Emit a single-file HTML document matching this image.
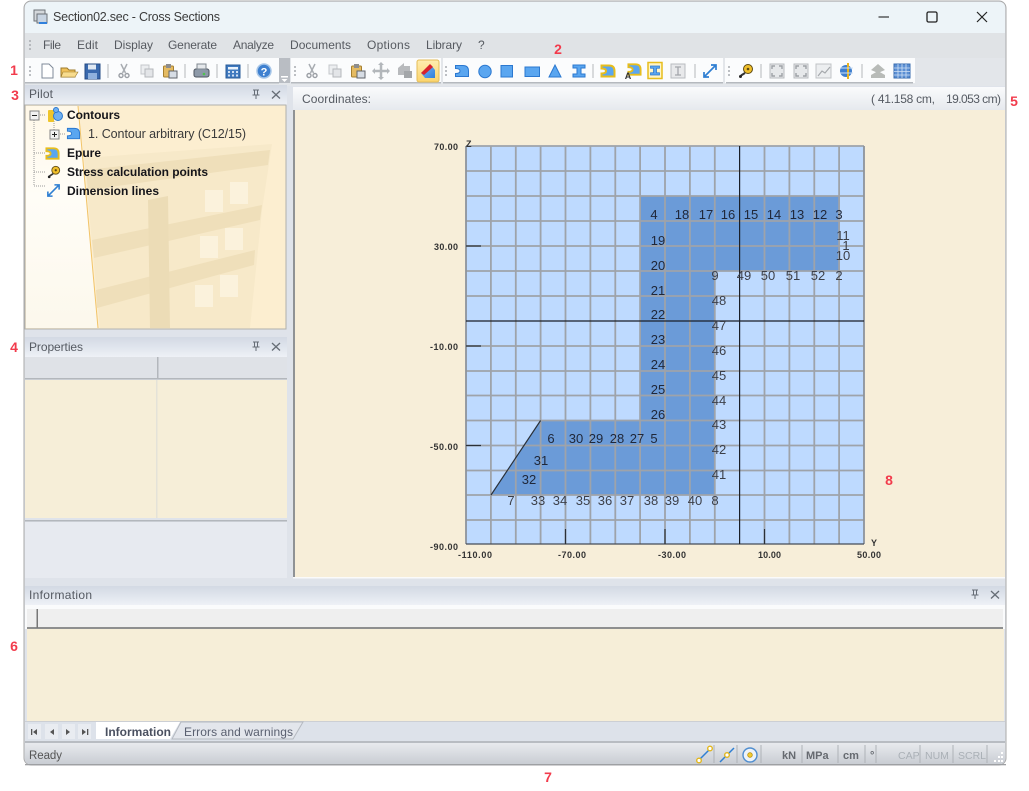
<!DOCTYPE html>
<html><head><meta charset="utf-8"><title>Section02.sec - Cross Sections</title>
<style>
html,body{margin:0;padding:0;background:#fff;width:1029px;height:791px;overflow:hidden}
svg{display:block}
text{font-family:"Liberation Sans",sans-serif}
.m{font-size:12px;fill:#565a60}
.h{font-size:12px;fill:#555a62}
.n{font-size:13px;fill:#20283a;text-anchor:middle}
.l{font-size:13px;fill:#3c3f48;text-anchor:middle}
.a{font-size:9px;font-weight:bold;fill:#333}
.r{font-size:14px;font-weight:bold;fill:#f23b4c;text-anchor:middle}
.t{font-size:12px;font-weight:bold;fill:#15151a}
.s{font-size:11.5px;fill:#555}
.u{font-size:11px;font-weight:bold;fill:#666a70}
.g{font-size:10.5px;fill:#aab0b6}
</style></head><body>
<svg width="1029" height="791" viewBox="0 0 1029 791" xmlns="http://www.w3.org/2000/svg">
<defs>
<linearGradient id="hd" x1="0" y1="0" x2="0" y2="1"><stop offset="0" stop-color="#d3d9e3"/><stop offset=".55" stop-color="#e1e6ee"/><stop offset="1" stop-color="#eef1f6"/></linearGradient>
<linearGradient id="co" x1="0" y1="0" x2="0" y2="1"><stop offset="0" stop-color="#fafbfc"/><stop offset="1" stop-color="#e6e9ee"/></linearGradient>
<linearGradient id="st" x1="0" y1="0" x2="0" y2="1"><stop offset="0" stop-color="#e8eaee"/><stop offset="1" stop-color="#c9cdd3"/></linearGradient>
<linearGradient id="lf" x1="0" y1="0" x2="0" y2="1"><stop offset="0" stop-color="#fff8e8"/><stop offset=".4" stop-color="#fffdf7"/><stop offset="1" stop-color="#fcf8ec"/></linearGradient>
<linearGradient id="ac" x1="0" y1="0" x2="0" y2="1"><stop offset="0" stop-color="#ffedb0"/><stop offset="1" stop-color="#fbd46c"/></linearGradient>
<linearGradient id="bl" x1="0" y1="0" x2="1" y2="1"><stop offset="0" stop-color="#7db8f4"/><stop offset="1" stop-color="#2f80dc"/></linearGradient>
<symbol id="cont" viewBox="0 0 16 16"><path d="M1.500 2.500H9Q14.500 2.500 14.500 8V13.500H1.500V10.500Q6 10.500 6 8Q6 5.500 1.500 5.500Z" fill="#5aa6f0" stroke="#2b78d0" stroke-width="1"/></symbol>
<symbol id="epu" viewBox="0 0 16 16"><path d="M1.500 2.500H9Q14.500 2.500 14.500 8V13.500H1.500V10.500Q6 10.500 6 8Q6 5.500 1.500 5.500Z" fill="#5aa6f0" stroke="#e7bd1d" stroke-width="2"/></symbol>
<symbol id="dim" viewBox="0 0 16 16"><path d="M2.500 13.500L13.500 2.500M9 2H14V7M2 9V14H7" fill="none" stroke="#2f7fd2" stroke-width="1.700"/></symbol>
<symbol id="ibeam" viewBox="0 0 16 16"><path d="M2 2H14V5H10V11H14V14H2V11H6V5H2Z" fill="#5aa6f0" stroke="#2b78d0" stroke-width="1"/></symbol>
<symbol id="cut" viewBox="0 0 16 16"><path d="M5 1L9.500 10M11 1L6.500 10" stroke="#a9adb2" stroke-width="1.500" fill="none"/><circle cx="5" cy="12.500" r="2" fill="none" stroke="#9a9ea4" stroke-width="1.400"/><circle cx="11" cy="12.500" r="2" fill="none" stroke="#9a9ea4" stroke-width="1.400"/></symbol>
<symbol id="copy" viewBox="0 0 16 16"><rect x="2" y="2" width="8" height="9" fill="#eceef0" stroke="#c4c7cb"/><rect x="6" y="6" width="8" height="8" fill="#e3e5e8" stroke="#b5b8bc"/></symbol>
<symbol id="paste" viewBox="0 0 16 16"><rect x="1.500" y="3" width="10" height="11" rx="1" fill="#e5bb62" stroke="#a57f2f"/><rect x="4" y="1" width="5" height="4" fill="#8d8d8d"/><rect x="7" y="8" width="8" height="7" fill="#d7dde5" stroke="#60656c"/></symbol>
<symbol id="meas" viewBox="0 0 16 16"><circle cx="10" cy="6" r="4.500" fill="#f0bf2a" stroke="#5e4a12"/><circle cx="10" cy="6" r="1.300" fill="#5e4a12"/><path d="M7 10L3 12.500" stroke="#333" stroke-width="2"/><circle cx="2.500" cy="13.500" r="1.500" fill="#222"/></symbol>
<symbol id="zoom" viewBox="0 0 16 16"><rect x="1" y="1" width="14" height="14" fill="#e6e8ea" stroke="#b9bcc0"/><path d="M3 6V3H6M10 3H13V6M13 10V13H10M6 13H3V10" fill="none" stroke="#9da1a6" stroke-width="1.400"/></symbol>
</defs>

<!-- window -->
<rect x="24" y="1" width="982" height="764" rx="7" fill="#dfe3ea" stroke="#a8a8a8" stroke-width="1"/>
<path d="M25 33V8Q25 2 31 2H999Q1005 2 1005 8V33Z" fill="#edf4f8"/>
<rect x="25" y="33" width="980" height="25" fill="#e0e3e6"/>
<rect x="25" y="58" width="980" height="28" fill="#e3e6ea"/>

<!-- title -->
<rect x="34" y="10" width="11" height="11" fill="#d4d8dc" stroke="#6d7278"/><rect x="37" y="14" width="10" height="9" fill="#c8d4e2" stroke="#6d7278"/><rect x="39" y="22" width="8" height="2" fill="#2f80dc"/>
<text x="53" y="21" font-size="12.500" fill="#3c3c3c" textLength="167" lengthAdjust="spacing">Section02.sec - Cross Sections</text>
<path d="M878.500 17H889" stroke="#333" stroke-width="1.200"/>
<rect x="927" y="12" width="10" height="10" rx="1.500" fill="none" stroke="#222" stroke-width="1.300"/>
<path d="M977 12L987 22M987 12L977 22" stroke="#222" stroke-width="1.200"/>

<!-- menu -->
<g fill="#a8acb0"><circle cx="30" cy="41" r="1"/><circle cx="30" cy="45" r="1"/><circle cx="30" cy="49" r="1"/></g>
<text class="m" x="43" y="49" textLength="18">File</text>
<text class="m" x="77" y="49" textLength="21">Edit</text>
<text class="m" x="114" y="49" textLength="39">Display</text>
<text class="m" x="168" y="49" textLength="49">Generate</text>
<text class="m" x="233" y="49" textLength="41">Analyze</text>
<text class="m" x="290" y="49" textLength="61">Documents</text>
<text class="m" x="367" y="49" textLength="43">Options</text>
<text class="m" x="426" y="49" textLength="36">Library</text>
<text class="m" x="478" y="49">?</text>

<!-- toolbars -->
<g fill="#fbfcfd">
<path d="M25 58H279V83H25Z"/><path d="M291 58H441V83H291Z"/><path d="M443 58H723V83H443Z"/><path d="M725 58H915V83H725Z"/>
</g>
<g fill="#b5b9be"><rect x="25" y="82" width="254" height="1.500"/><rect x="291" y="82" width="150" height="1.500"/><rect x="443" y="82" width="280" height="1.500"/><rect x="726" y="82" width="187" height="1.500"/></g>
<rect x="279" y="58" width="11" height="25" fill="#b9bdc3"/><rect x="281" y="76" width="7" height="1.500" fill="#fff"/><path d="M281.500 79H287.500L284.500 82Z" fill="#fff"/>
<g fill="#a8acb0"><circle cx="30" cy="67" r="1"/><circle cx="30" cy="71" r="1"/><circle cx="30" cy="75" r="1"/><circle cx="295" cy="67" r="1"/><circle cx="295" cy="71" r="1"/><circle cx="295" cy="75" r="1"/><circle cx="446" cy="67" r="1"/><circle cx="446" cy="71" r="1"/><circle cx="446" cy="75" r="1"/><circle cx="729" cy="67" r="1"/><circle cx="729" cy="71" r="1"/><circle cx="729" cy="75" r="1"/></g>
<g stroke="#b4b7bb" stroke-width="1"><path d="M108 64V78M185 64V78M217 64V78M248 64V78M593 64V78M695 64V78M761 64V78M862 64V78"/></g>
<!-- tb1 -->
<path d="M42 64H49L53 68V78H42Z" fill="#fff" stroke="#7f8a99"/>
<path d="M61 68H67L69 70H75V77H61Z" fill="#f0c15a" stroke="#9c7a2b"/><path d="M63 72H78L75 77H61Z" fill="#f8dc8e" stroke="#9c7a2b" stroke-width=".6"/>
<rect x="85" y="64" width="15" height="15" fill="#3969ad" stroke="#264b85"/><rect x="88" y="64.500" width="8" height="5" fill="#dfe8f3"/><rect x="88" y="73" width="9" height="6" fill="#8fb1dd"/>
<use href="#cut" x="116" y="63" width="16" height="16"/><use href="#copy" x="139" y="63" width="16" height="16"/><use href="#paste" x="162" y="63" width="16" height="16"/>
<rect x="194" y="69" width="15" height="8" rx="2" fill="#8d99a8" stroke="#4d5560"/><rect x="197" y="64" width="9" height="5" fill="#e5e8eb" stroke="#808790"/><circle cx="204" cy="74" r="1.300" fill="#4ec24e"/>
<rect x="226" y="65" width="14" height="13" fill="#3f79bf" stroke="#2a5b99"/><rect x="228" y="67" width="10" height="2.500" fill="#eaf2fb"/><g fill="#cfe0f4"><rect x="228" y="71" width="2" height="2"/><rect x="232" y="71" width="2" height="2"/><rect x="236" y="71" width="2" height="2"/><rect x="228" y="74.500" width="2" height="2"/><rect x="232" y="74.500" width="2" height="2"/><rect x="236" y="74.500" width="2" height="2"/></g>
<circle cx="264" cy="71" r="7" fill="#3e80d0" stroke="#a7c6e8" stroke-width="1.500"/><text x="264" y="75.500" font-size="11" font-weight="bold" fill="#fff" text-anchor="middle">?</text>
<!-- tb2 -->
<use href="#cut" x="304" y="63" width="16" height="16"/><use href="#copy" x="327" y="63" width="16" height="16"/><use href="#paste" x="350" y="63" width="16" height="16"/>
<path d="M381 64V78M374 71H388" stroke="#b3b7bb" stroke-width="2.500"/><path d="M381 62L378 65H384ZM381 80L378 77H384ZM372 71L375 68V74ZM390 71L387 68V74Z" fill="#b3b7bb"/>
<path d="M398 68L404 63V66H410V71H404V75H398Z" fill="#b8babd"/><rect x="404" y="71" width="8" height="7" fill="#a3a6a9"/>
<rect x="417" y="60" width="22" height="22" rx="2" fill="url(#ac)" stroke="#e4bd58"/>
<path d="M421 73L431 65L435 70V78H425Z" fill="url(#bl)"/><path d="M421 73L430 64L433 67L424 75Z" fill="#d8222d"/>
<!-- tb3 -->
<use href="#cont" x="454" y="63" width="16" height="16"/>
<circle cx="485" cy="71.500" r="6.200" fill="#5aa6f0" stroke="#2b78d0"/>
<rect x="501" y="65.500" width="11.500" height="11.500" fill="#5aa6f0" stroke="#2b78d0"/>
<rect x="525" y="67" width="14.500" height="9.500" fill="#5aa6f0" stroke="#2b78d0"/>
<path d="M555 65L561 77H549Z" fill="#5aa6f0" stroke="#2b78d0"/>
<use href="#ibeam" x="571" y="63" width="16" height="16"/>
<use href="#epu" x="600" y="63" width="16" height="16"/>
<use href="#epu" x="627" y="62" width="15" height="15"/><text x="628" y="79" font-size="9" font-weight="bold" fill="#333" text-anchor="middle">A</text>
<rect x="648" y="62.500" width="14" height="16" fill="#fff5c8" stroke="#e7bd1d" stroke-width="1.500"/><use href="#ibeam" x="649" y="64" width="12" height="13"/>
<rect x="671" y="64" width="14" height="14" fill="#e8e9eb" stroke="#b9bcc0"/><path d="M675 67H681M678 67V75M675 75H681" stroke="#a3a6ab" stroke-width="1.300"/>
<use href="#dim" x="702" y="63" width="16" height="16"/>
<!-- tb4 -->
<use href="#meas" x="738" y="63" width="16" height="16"/>
<use href="#zoom" x="769" y="63" width="16" height="16"/><use href="#zoom" x="793" y="63" width="16" height="16"/>
<rect x="816" y="64" width="15" height="14" fill="#eceef0" stroke="#c0c3c6"/><path d="M818 76L822 71L825 73L830 67" fill="none" stroke="#a5a8ac" stroke-width="1.200"/>
<circle cx="846" cy="71" r="6" fill="#3f7fcf"/><path d="M848 63V79" stroke="#eab41e" stroke-width="2"/><path d="M840 68H853M840 73H853" stroke="#cfe0f4" stroke-width="1"/>
<path d="M871 75L878 71L885 75V78H871ZM871 70L878 64L885 70L878 73Z" fill="#b8bbb8"/>
<rect x="894" y="64" width="16" height="14" fill="#5b8fd4" stroke="#3a6db0"/><path d="M894 68H910M894 71.500H910M894 75H910M898 64V78M902 64V78M906 64V78" stroke="#cfe0f4" stroke-width=".8"/>

<!-- pilot -->
<rect x="25" y="85" width="262" height="20" fill="url(#hd)"/>
<text class="h" x="29" y="98" textLength="24">Pilot</text>
<path d="M253 90H259M254.500 90V95H257.500V90M252.500 95H259.500M256 95V99" fill="none" stroke="#666d76"/>
<path d="M272 91L280 98.500M280 91L272 98.500" stroke="#666d76" stroke-width="1.300"/>
<rect x="25" y="105" width="261" height="224" fill="#fceed0" stroke="#b0b0ac"/>
<path d="M26 106H78L98 328H26Z" fill="url(#lf)"/>
<path d="M78 106L98 328" stroke="#f2c468" stroke-width="1"/>
<path d="M84 158L272 144L262 210L250 328H100Z" fill="#f7e9c9"/>
<path d="M86 170L270 150L268 165L88 190ZM92 240L262 205L260 220L94 258ZM96 290L255 250L254 265L97 308Z" fill="#efdfba"/>
<path d="M148 200L168 196L170 328H150Z" fill="#ecdcb6"/>
<g fill="#fbf2dc"><rect x="205" y="190" width="18" height="22"/><rect x="230" y="182" width="18" height="22"/><rect x="200" y="236" width="18" height="22"/><rect x="225" y="228" width="18" height="22"/><rect x="195" y="285" width="18" height="22"/><rect x="220" y="275" width="18" height="22"/></g>
<!-- tree -->
<path d="M34 120V186H46M34 115H46M54 121V134M54 134H66M34 153H46M34 172H46" fill="none" stroke="#9b9b9b" stroke-dasharray="1 1"/>
<rect x="30" y="111" width="9" height="9" fill="#f2f2f2" stroke="#858585"/><path d="M32 115.500H37" stroke="#222"/>
<rect x="50" y="130" width="9" height="9" fill="#f2f2f2" stroke="#858585"/><path d="M52 134.500H57M54.500 132V137" stroke="#222"/>
<rect x="48" y="110" width="6" height="12" rx="1" fill="#efc52a"/><circle cx="58" cy="116" r="4.500" fill="#6fb0f0" stroke="#2b78d0"/><circle cx="56" cy="110" r="2.500" fill="#6fb0f0" stroke="#2b78d0"/>
<use href="#cont" x="66" y="126" width="15" height="15"/>
<use href="#epu" x="45" y="146" width="15" height="15"/>
<use href="#meas" x="47" y="165" width="14" height="14"/>
<use href="#dim" x="46" y="183" width="15" height="15"/>
<text class="t" x="67" y="119" textLength="53">Contours</text>
<text x="88" y="138" font-size="12.500" fill="#3a3a3a" textLength="158">1. Contour arbitrary (C12/15)</text>
<text class="t" x="67" y="157" textLength="34">Epure</text>
<text class="t" x="67" y="176" textLength="141">Stress calculation points</text>
<text class="t" x="67" y="195" textLength="92">Dimension lines</text>

<!-- properties -->
<rect x="25" y="337" width="262" height="20" fill="url(#hd)"/>
<text class="h" x="29" y="351" textLength="54">Properties</text>
<path d="M253 342H259M254.500 342V347H257.500V342M252.500 347H259.500M256 347V351" fill="none" stroke="#666d76"/>
<path d="M272 343L280 350.500M280 343L272 350.500" stroke="#666d76" stroke-width="1.300"/>
<rect x="25" y="357" width="262" height="21" fill="#dfe2e7"/><rect x="25" y="378" width="262" height="1.500" fill="#b3b7bc"/><rect x="157" y="357" width="1.500" height="21" fill="#b3b7bc"/>
<rect x="25" y="380" width="262" height="138" fill="#f6eed8"/><rect x="156" y="380" width="1.500" height="138" fill="#e4e2d8"/>
<rect x="25" y="520" width="262" height="1.500" fill="#b3b7bc"/>
<rect x="25" y="522" width="262" height="56" fill="#e7eaf0"/>

<!-- coordinates & viewport -->
<rect x="293" y="87" width="712" height="23" fill="url(#co)"/>
<text class="h" x="302" y="103" textLength="69">Coordinates:</text>
<text class="h" x="871" y="103" textLength="64">( 41.158 cm,</text>
<text class="h" x="946" y="103" textLength="55">19.053 cm)</text>
<rect x="294" y="110" width="711" height="467" fill="#f7eed9"/>
<rect x="293" y="110" width="2" height="468" fill="#8f9295"/>
<rect x="293" y="577" width="712" height="1.500" fill="#fafafa"/>

<!-- plot -->
<rect x="466" y="146" width="398" height="398" fill="#bedaff"/>
<path d="M640 196H839V271H715V495H491L540.600 420.500H640Z" fill="#6b9bd8"/>
<g stroke="#9ea3aa" stroke-width="1.800" fill="none">
<path d="M490.900 146V544M515.800 146V544M540.600 146V544M565.500 146V544M590.400 146V544M615.300 146V544M640.100 146V544M665 146V544M689.900 146V544M714.800 146V544M764.500 146V544M789.400 146V544M814.300 146V544M839.100 146V544"/>
<path d="M466 171H864M466 196H864M466 221H864M466 246H864M466 271H864M466 296H864M466 346H864M466 371H864M466 395.500H864M466 420.500H864M466 445.500H864M466 470.500H864M466 495H864M466 520H864"/>
<path d="M466 146H864"/>
</g>
<path d="M466 146V544M864 146V544" stroke="#8d939b" stroke-width="1.800"/>
<path d="M466 544H864" stroke="#444c58" stroke-width="1.300"/>
<path d="M466 321H864M739.600 146V544" stroke="#1a1f28" stroke-width="1.200"/>
<path d="M491 495L540.600 420.500" stroke="#2a3038" stroke-width="1.200"/>
<path d="M466 246H481M466 346H481M466 445.500H481M565.500 544V529M665 544V529M764.500 544V529" stroke="#2a3038" stroke-width="1.200"/>

<text class="n" x="654" y="219">4</text><text class="n" x="682" y="219">18</text><text class="n" x="706" y="219">17</text><text class="n" x="728" y="219">16</text><text class="n" x="751" y="219">15</text><text class="n" x="774" y="219">14</text><text class="n" x="797" y="219">13</text><text class="n" x="820" y="219">12</text><text class="n" x="839" y="219">3</text>
<text class="n" x="658" y="245">19</text><text class="n" x="658" y="270">20</text><text class="n" x="658" y="295">21</text><text class="n" x="658" y="319">22</text><text class="n" x="658" y="344">23</text><text class="n" x="658" y="369">24</text><text class="n" x="658" y="394">25</text><text class="n" x="658" y="419">26</text>
<text class="n" x="551" y="443">6</text><text class="n" x="576" y="443">30</text><text class="n" x="596" y="443">29</text><text class="n" x="617" y="443">28</text><text class="n" x="637" y="443">27</text><text class="n" x="654" y="443">5</text>
<text class="n" x="541" y="465">31</text><text class="n" x="529" y="484">32</text>
<text class="l" x="843" y="240">11</text><text class="l" x="846" y="250">1</text><text class="l" x="843" y="260">10</text>
<text class="l" x="715" y="280">9</text><text class="l" x="744" y="280">49</text><text class="l" x="768" y="280">50</text><text class="l" x="793" y="280">51</text><text class="l" x="818" y="280">52</text><text class="l" x="839" y="280">2</text>
<text class="l" x="719" y="305">48</text><text class="l" x="719" y="330">47</text><text class="l" x="719" y="355">46</text><text class="l" x="719" y="380">45</text><text class="l" x="719" y="405">44</text><text class="l" x="719" y="429">43</text><text class="l" x="719" y="454">42</text><text class="l" x="719" y="479">41</text>
<text class="l" x="511" y="505">7</text><text class="l" x="538" y="505">33</text><text class="l" x="560" y="505">34</text><text class="l" x="583" y="505">35</text><text class="l" x="605" y="505">36</text><text class="l" x="627" y="505">37</text><text class="l" x="651" y="505">38</text><text class="l" x="672" y="505">39</text><text class="l" x="695" y="505">40</text><text class="l" x="715" y="505">8</text>

<text class="a" x="434" y="150" textLength="24">70.00</text>
<text class="a" x="434" y="250" textLength="24">30.00</text>
<text class="a" x="430" y="350" textLength="28">-10.00</text>
<text class="a" x="430" y="450" textLength="28">-50.00</text>
<text class="a" x="430" y="550" textLength="28">-90.00</text>
<text class="a" x="458" y="558" textLength="34">-110.00</text>
<text class="a" x="558" y="558" textLength="28">-70.00</text>
<text class="a" x="658" y="558" textLength="28">-30.00</text>
<text class="a" x="758" y="558" textLength="23">10.00</text>
<text class="a" x="857" y="558" textLength="24">50.00</text>
<text class="a" x="871" y="546">Y</text>
<text class="a" x="466" y="147">Z</text>

<!-- information -->
<rect x="25" y="586" width="980" height="19" fill="url(#hd)"/>
<text class="h" x="29" y="599" textLength="63">Information</text>
<path d="M972 590H978M973.500 590V595H976.500V590M971.500 595H978.500M975 595V599" fill="none" stroke="#666d76"/>
<path d="M991 591L999 598.500M999 591L991 598.500" stroke="#666d76" stroke-width="1.300"/>
<rect x="25" y="605" width="980" height="24" fill="#fafbfc"/>
<rect x="27" y="609" width="976" height="18" fill="#efefef"/>
<rect x="27" y="627" width="976" height="2" fill="#8e8f8f"/>
<rect x="36.500" y="609" width="1.500" height="19" fill="#777"/>
<rect x="27" y="629" width="977" height="92" fill="#f6eed8"/>
<rect x="26" y="721" width="979" height="20" fill="#dde2ea"/>
<rect x="25" y="721" width="980" height=".8" fill="#c7cacf"/>
<g fill="#e9ecf1"><rect x="28" y="724" width="13" height="15"/><rect x="45" y="724" width="13" height="15"/><rect x="62" y="724" width="13" height="15"/><rect x="78" y="724" width="13" height="15"/></g>
<g fill="#555"><rect x="31" y="729" width="1.300" height="6"/><path d="M37 729V735L33 732ZM54 729V735L50 732ZM66 729V735L70 732ZM82 729V735L86 732Z"/><rect x="87" y="729" width="1.300" height="6"/></g>
<path d="M96 722H172L180 722L170 739H96Z" fill="#fff"/>
<text x="105" y="736" font-size="12" font-weight="bold" fill="#4a5060" textLength="66">Information</text>
<path d="M172 739L181 722H303L293 739Z" fill="#e3e6ec" stroke="#b5b9c0"/>
<text x="184" y="736" font-size="12" fill="#5a6070" textLength="109">Errors and warnings</text>
<rect x="25" y="741" width="980" height="2" fill="#b8bcc2"/>

<!-- status -->
<path d="M25 743H1005V759Q1005 764 1000 764H30Q25 764 25 759Z" fill="url(#st)"/>
<rect x="25" y="764" width="981" height="1.300" fill="#9ea0a3"/>
<text class="s" x="29" y="759" textLength="33">Ready</text>
<g stroke="#aeb2b7" stroke-width="1"><path d="M714 745V763M737 745V763M761 745V763M802 745V763M838 745V763M865 745V763M876 745V763M920 745V763M953 745V763M987 745V763"/></g>
<path d="M699 760L710 749" stroke="#2f7fd2" stroke-width="1.500"/><circle cx="699" cy="760.500" r="2.300" fill="#fff" stroke="#e2b61c" stroke-width="1.400"/><circle cx="710" cy="748.500" r="2.300" fill="#fff" stroke="#e2b61c" stroke-width="1.400"/>
<path d="M720 762L734 748" stroke="#2f7fd2" stroke-width="1.500"/><circle cx="727" cy="755" r="2.300" fill="#fff" stroke="#e2b61c" stroke-width="1.400"/>
<circle cx="750" cy="755" r="7" fill="#eef3f8" stroke="#4f8dcf" stroke-width="1.400"/><circle cx="750" cy="755" r="2.300" fill="#f5cc30" stroke="#b59212" stroke-width=".8"/>
<text class="u" x="782" y="759">kN</text>
<text class="u" x="806" y="759">MPa</text>
<text class="u" x="843" y="759">cm</text>
<text class="u" x="870" y="759">°</text>
<text class="g" x="898" y="759">CAP</text>
<text class="g" x="925" y="759">NUM</text>
<text class="g" x="958" y="759">SCRL</text>
<g fill="#fff"><rect x="1001" y="752" width="2" height="2"/><rect x="998" y="756" width="2" height="2"/><rect x="1001" y="756" width="2" height="2"/><rect x="994" y="760" width="2" height="2"/><rect x="998" y="760" width="2" height="2"/><rect x="1001" y="760" width="2" height="2"/></g>

<!-- red callouts -->
<text class="r" x="14" y="75">1</text>
<text class="r" x="558" y="54">2</text>
<text class="r" x="15" y="100">3</text>
<text class="r" x="14" y="352">4</text>
<text class="r" x="1014" y="106">5</text>
<text class="r" x="14" y="651">6</text>
<text class="r" x="548" y="782">7</text>
<text class="r" x="889" y="485">8</text>
</svg>
</body></html>
